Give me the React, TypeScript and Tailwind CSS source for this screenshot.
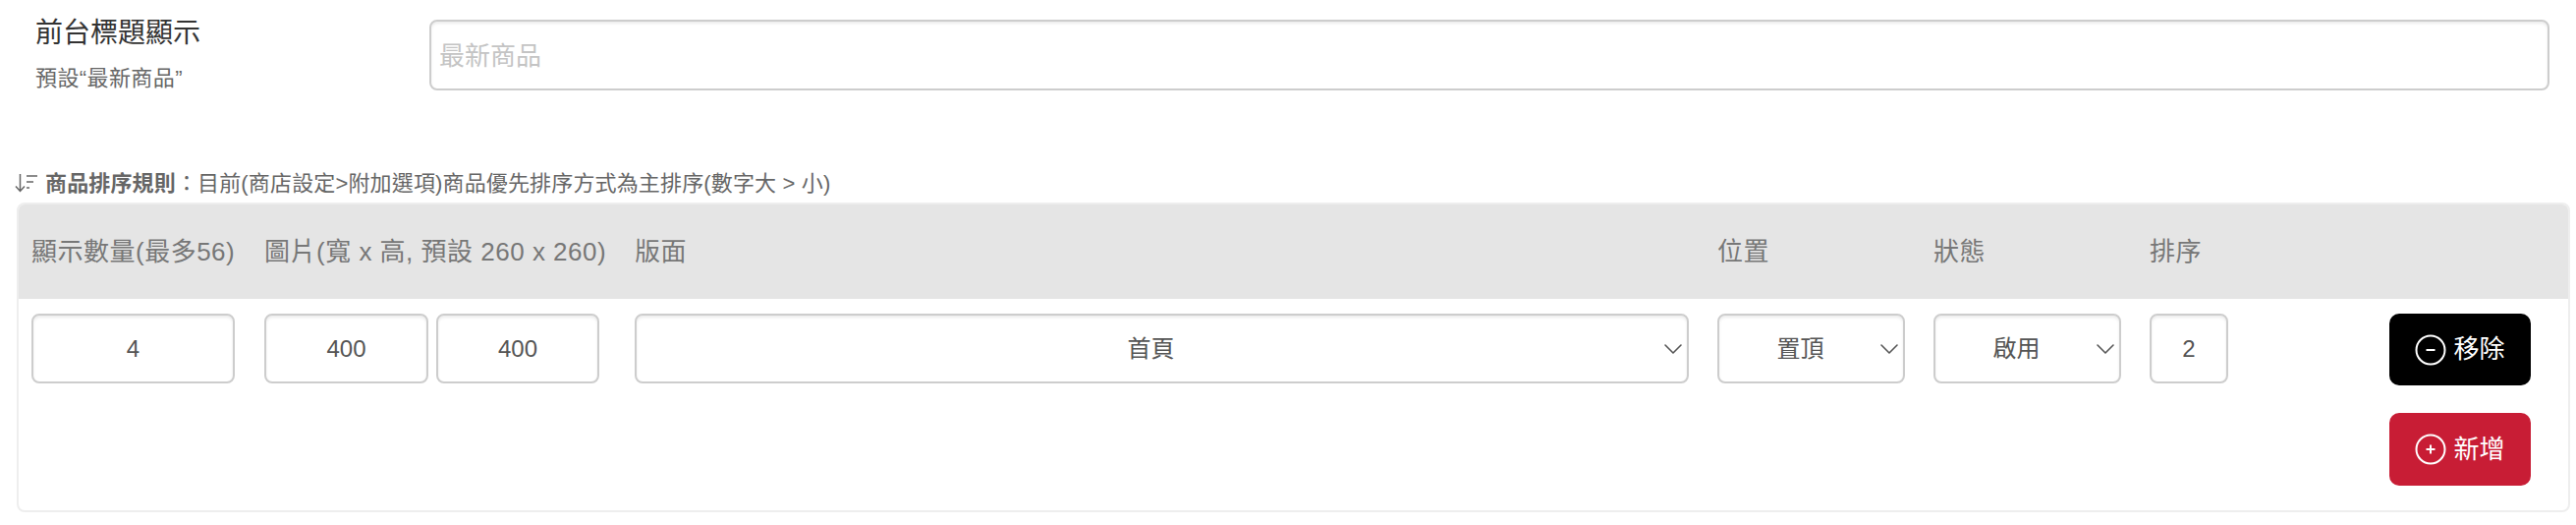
import { ChevronDown } from "lucide-react"

const fontStack = { fontFamily: '"Liberation Sans", "Noto Sans CJK TC", sans-serif' }

const fieldClass =
  "h-[71px] rounded-[8px] border-2 border-[#cdcdcd] bg-white text-center text-[24px] text-[#555] shadow-[inset_0_2px_3px_rgba(0,0,0,0.08)] outline-none"

const columnsClass = "grid grid-cols-[237px_377px_1102px_220px_220px_80px]"

function SortIcon() {
  return (
    <svg width="26" height="22" viewBox="0 0 26 22" fill="none" stroke="#666" strokeWidth="1.5" className="shrink-0">
      <path d="M5.5 2v17M1 14.5l4.5 5 4.5-5" />
      <path d="M12 4h11M12 10h7M12 16h3" />
    </svg>
  )
}

function RoundIcon({ plus }: { plus?: boolean }) {
  return (
    <svg width="32" height="32" viewBox="0 0 32 32" fill="none" stroke="white" className="shrink-0">
      <circle cx="16" cy="16" r="14.5" strokeWidth="2" />
      <path d="M11.5 16h9" strokeWidth="2" />
      {plus && <path d="M16 11.5v9" strokeWidth="2" />}
    </svg>
  )
}

function SelectBox({ value, className }: { value: string; className: string }) {
  return (
    <div className={`relative ${className}`}>
      <select
        defaultValue={value}
        className={`${fieldClass} w-full appearance-none pr-[22px] [text-align-last:center]`}
      >
        <option>{value}</option>
      </select>
      <ChevronDown
        size={32}
        strokeWidth={1.2}
        color="#555"
        className="pointer-events-none absolute right-[0px] top-[20px]"
      />
    </div>
  )
}

export default function App() {
  return (
    <div className="h-[534px] w-[2622px] bg-white" style={fontStack}>
      {/* title setting */}
      <div className="flex pl-[36px] pr-[27px] pt-[20px]">
        <div className="w-[401px] shrink-0">
          <div className="text-[28px] leading-[28px] text-[#333]">前台標題顯示</div>
          <div className="mt-[19px] text-[22px] leading-[26px] tracking-[0.4px] text-[#666]">預設“最新商品”</div>
        </div>
        <input
          placeholder="最新商品"
          className="h-[72px] flex-1 rounded-[8px] border-2 border-[#cdcdcd] px-[8px] pt-[2px] text-[26px] shadow-[inset_0_2px_3px_rgba(0,0,0,0.08)] outline-none placeholder:text-[#c4c4c4]"
        />
      </div>

      {/* sort rule */}
      <div className="ml-[15px] mt-[78px] flex h-[30px] items-center text-[22px] tracking-[0.15px] text-[#666]">
        <SortIcon />
        <span className="ml-[5px] font-bold">商品排序規則</span>
        <span>：目前(商店設定&gt;附加選項)商品優先排序方式為主排序(數字大 &gt; 小)</span>
      </div>

      {/* table */}
      <div className="ml-[17px] mt-[5px] h-[315px] w-[2599px] overflow-hidden rounded-[8px] border-2 border-[#eeeeee]">
        <div className={`${columnsClass} h-[96px] items-center bg-[#e5e5e5] pl-[13px] text-[26px] tracking-[0.5px] text-[#777]`}>
          <div className="whitespace-nowrap">顯示數量(最多56)</div>
          <div className="whitespace-nowrap">圖片(寬 x 高, 預設 260 x 260)</div>
          <div>版面</div>
          <div>位置</div>
          <div>狀態</div>
          <div>排序</div>
        </div>
        <div className="flex pl-[13px] pt-[15px]">
          <div className={`${columnsClass} items-start`}>
            <input defaultValue="4" className={`${fieldClass} w-[207px]`} />
            <div className="flex gap-[8px]">
              <input defaultValue="400" className={`${fieldClass} w-[167px]`} />
              <input defaultValue="400" className={`${fieldClass} w-[166px]`} />
            </div>
            <SelectBox value="首頁" className="w-[1073px]" />
            <SelectBox value="置頂" className="w-[191px]" />
            <SelectBox value="啟用" className="w-[191px]" />
            <input defaultValue="2" className={`${fieldClass} w-[80px]`} />
          </div>
          <div className="ml-[164px] flex w-[144px] flex-col gap-[28px]">
            <button className="flex h-[73px] items-center justify-center gap-[7px] rounded-[10px] bg-black text-[26px] text-white">
              <RoundIcon />
              移除
            </button>
            <button className="flex h-[74px] items-center justify-center gap-[7px] rounded-[10px] bg-[#c81d35] text-[26px] text-white">
              <RoundIcon plus />
              新增
            </button>
          </div>
        </div>
      </div>
    </div>
  )
}
